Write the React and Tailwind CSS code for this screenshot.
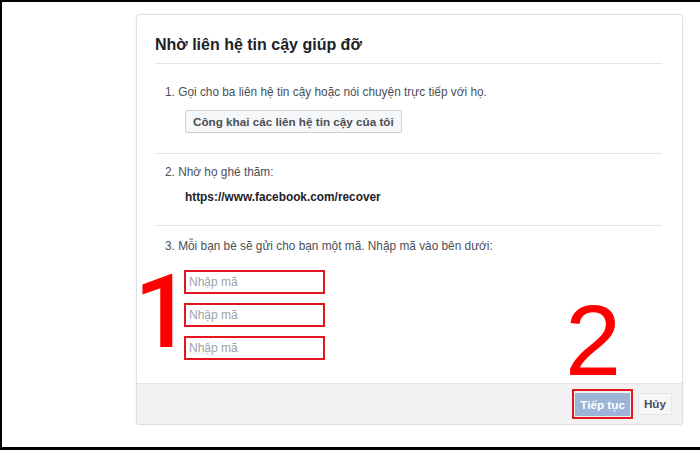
export default function App() {
    const codes = [1, 2, 3];

    return (
        <div className="w-[700px] h-[450px] bg-white border-l-2 border-t-2 border-b-[3px] border-black overflow-hidden font-['Liberation_Sans',Arial,sans-serif]">
            <div className="relative ml-[134px] mt-[12px] w-[547px] h-[411px] flex flex-col bg-white border border-[#dddfe2] rounded-[3px] shadow-[0_0_2px_rgba(0,0,0,0.08)]">
                {/* Header */}
                <div className="mx-[18px] mr-[20px] pt-[20px] pb-[8px] border-b border-[#e5e5e5]">
                    <h2 className="text-[16px] leading-[20px] font-bold text-[#1d2129]">Nhờ liên hệ tin cậy giúp đỡ</h2>
                </div>

                {/* Step 1 */}
                <div className="mx-[18px] mr-[20px] pl-[10px] pt-[20px] pb-[20px] border-b border-[#e5e5e5]">
                    <p className="text-[11.85px] leading-[16px] text-[#4b4f56]">1. Gọi cho ba liên hệ tin cậy hoặc nói chuyện trực tiếp với họ.</p>
                    <button className="mt-[10px] ml-[20px] h-[23px] px-[7px] bg-[#f6f7f9] border border-[#ced0d4] rounded-[2px] text-[11.7px] font-bold text-[#4b4f56]">
                        Công khai các liên hệ tin cậy của tôi
                    </button>
                </div>

                {/* Step 2 */}
                <div className="mx-[18px] mr-[20px] pl-[10px] pt-[10px] pb-[20px] border-b border-[#e5e5e5]">
                    <p className="text-[11.85px] leading-[16px] text-[#4b4f56]">2. Nhờ họ ghé thăm:</p>
                    <p className="mt-[9px] ml-[20px] text-[11.85px] leading-[16px] font-bold text-[#1d2129]">https://www.facebook.com/recover</p>
                </div>

                {/* Step 3 */}
                <div className="flex-1 mx-[18px] mr-[20px] pl-[10px] pt-[12px]">
                    <p className="text-[11.85px] leading-[16px] text-[#4b4f56]">3. Mỗi bạn bè sẽ gửi cho bạn một mã. Nhập mã vào bên dưới:</p>
                    <div className="mt-[16px] ml-[19px] flex flex-col gap-[9px]">
                        {codes.map((c) => (
                            <input
                                key={c}
                                placeholder="Nhập mã"
                                className="w-[141px] h-[24px] px-[3px] border-2 border-[#e3161f] text-[12px] text-[#1d2129] placeholder:text-[#a0a3a8] outline-none"
                            />
                        ))}
                    </div>
                </div>

                {/* Footer */}
                <div className="h-[41px] flex items-center justify-end gap-[5px] pr-[10px] bg-[#f2f2f2] border-t border-[#e5e5e5] rounded-b-[3px]">
                    <div className="border-2 border-[#e3161f] p-px">
                        <button className="h-[23px] px-[5px] bg-[#9cb4d8] text-white text-[11.7px] font-bold">Tiếp tục</button>
                    </div>
                    <button className="h-[22px] px-[5px] bg-[#f6f7f9] border border-[#e4e6ea] text-[11.7px] font-bold text-[#4b4f56]">Hủy</button>
                </div>

                {/* Annotations */}
                <span className="absolute left-[-3px] top-[247px] font-['Roboto',sans-serif] text-[102px] leading-[100px] font-medium text-[#ff0000]">1</span>
                <span className="absolute left-[428px] top-[275px] text-[101px] leading-[100px] text-[#ff0000]">2</span>
            </div>
        </div>
    );
}
